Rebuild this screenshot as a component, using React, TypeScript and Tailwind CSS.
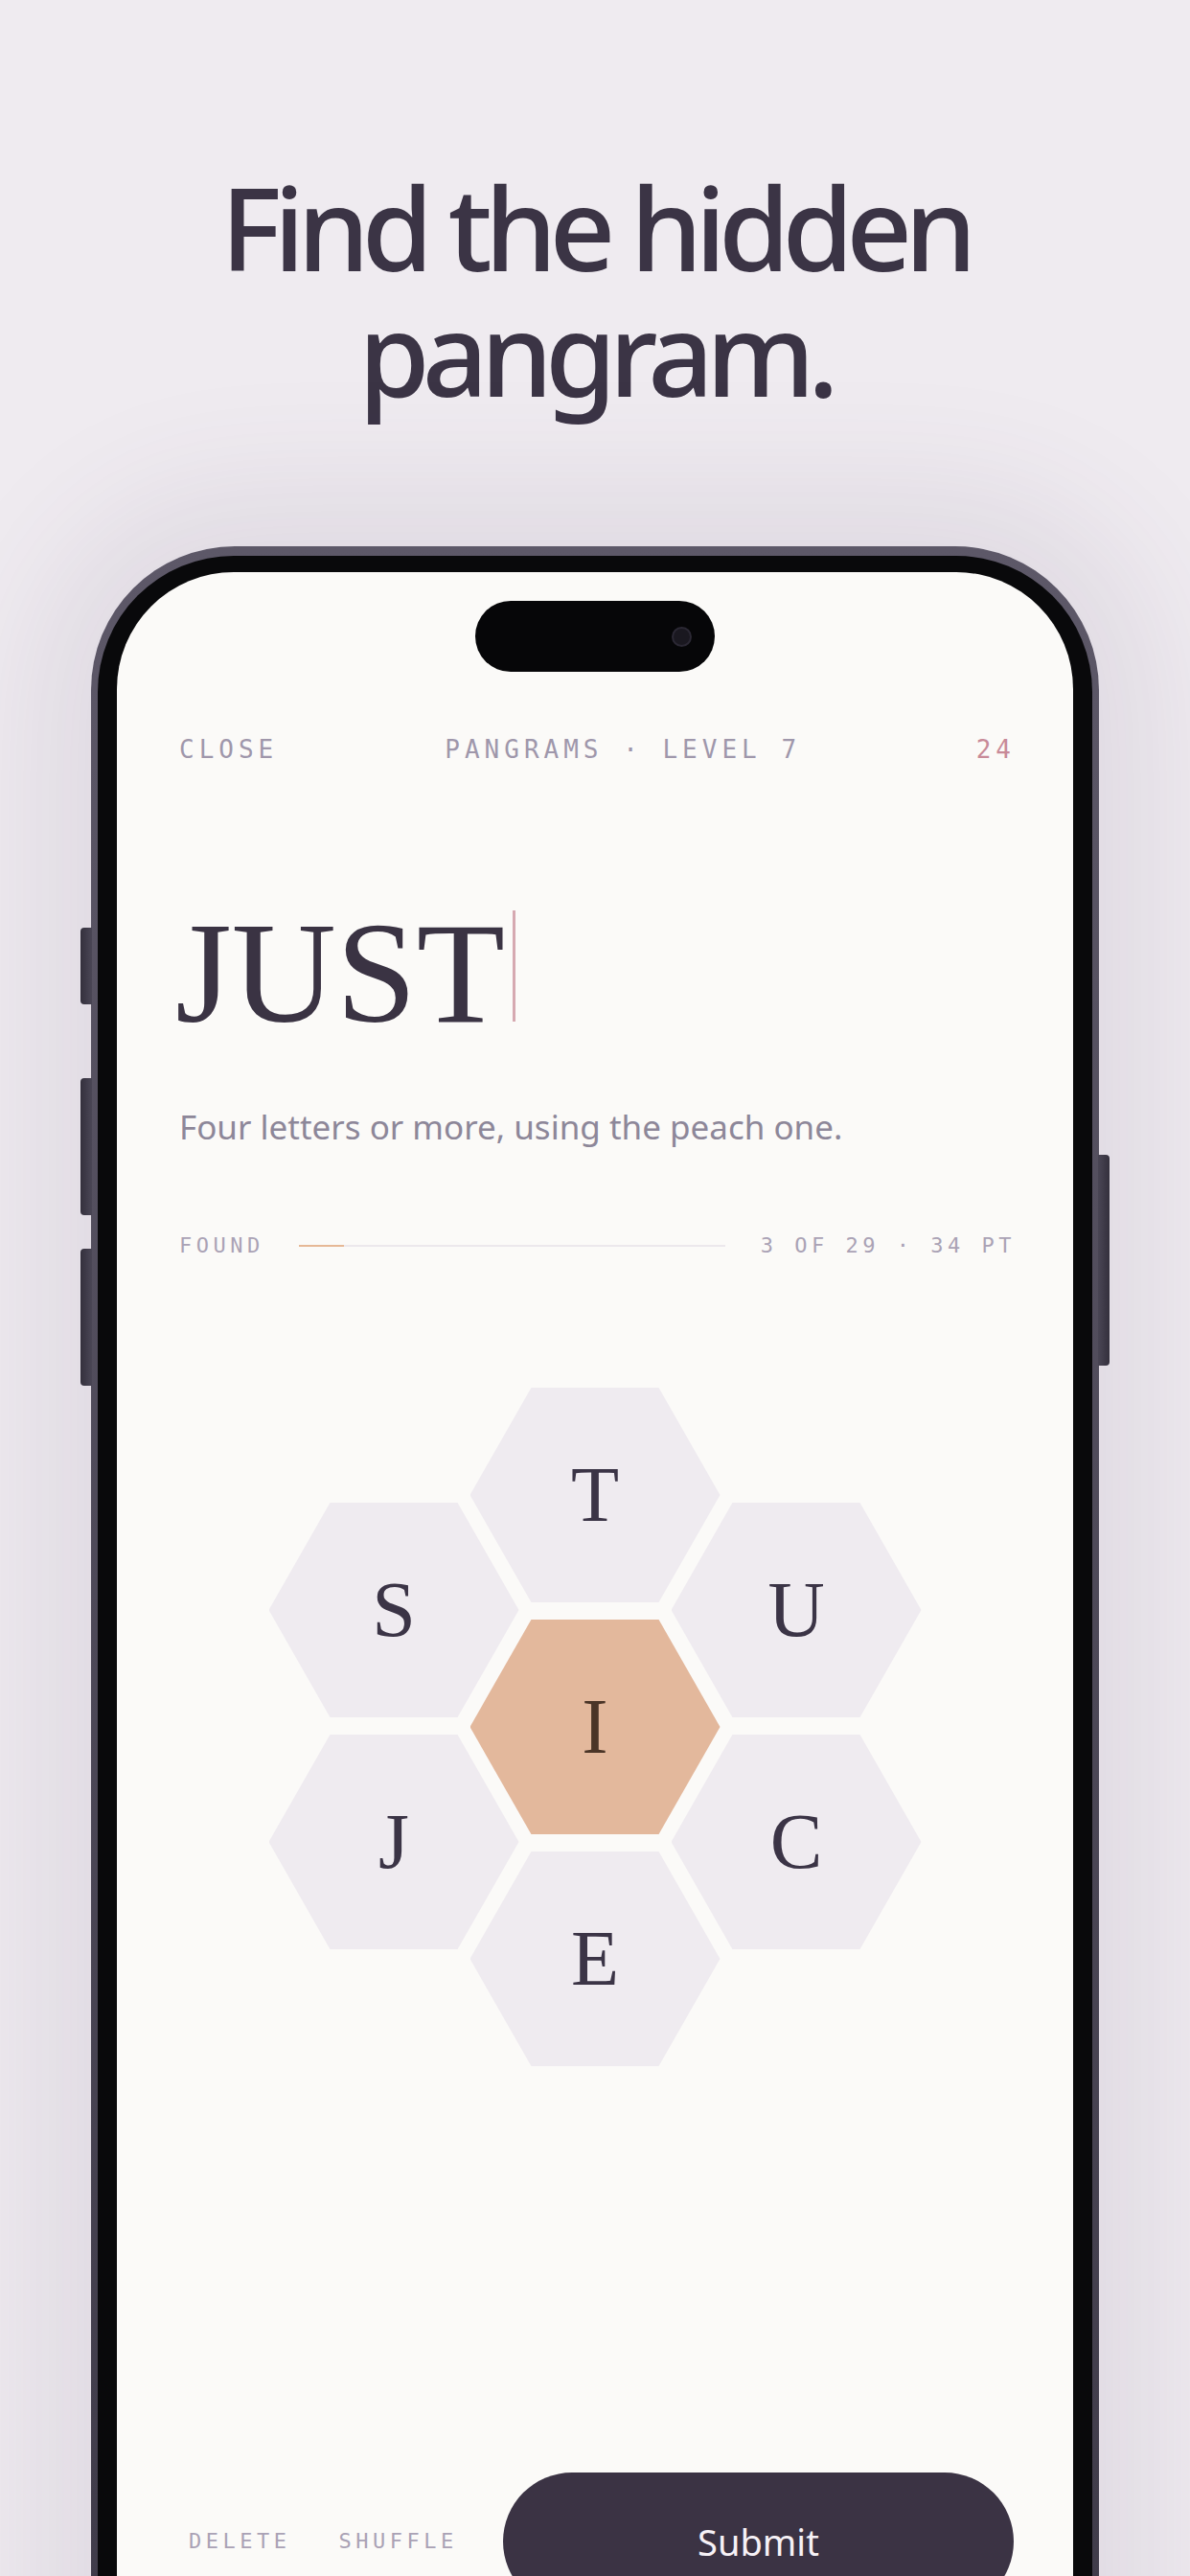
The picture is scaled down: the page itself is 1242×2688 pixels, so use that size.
import React from "react";

const mono = "font-['DejaVu_Sans_Mono','Liberation_Mono',monospace]";
const serif = "font-['Liberation_Serif','DejaVu_Serif',serif]";
const sans = "font-['Noto_Sans','Open_Sans',sans-serif]";

const hexShape =
    "[clip-path:polygon(24.5%_0,75.5%_0,100%_50%,75.5%_100%,24.5%_100%,0_50%)]";

const Hex = ({ letter, center = false }: { letter: string; center?: boolean }) => {
    return (
        <div
            className={`w-[261px] h-[224px] flex items-center justify-center ${hexShape} ${
                center ? "bg-[#e3b89c] text-[#4b3527]" : "bg-[#efebf0] text-[#3b3446]"
            }`}
        >
            <span className={`${serif} text-[82px] leading-none`}>{letter}</span>
        </div>
    );
};

export default function App() {
    return (
        <div className="w-[1242px] h-[2688px] overflow-hidden bg-[#efebf0] flex flex-col items-center">
            <h1
                className={`${sans} mt-[171px] text-center text-[120px] leading-[131px] font-medium tracking-[-0.065em] text-[#3b3445]`}
            >
                Find the hidden
                <br />
                pangram.
            </h1>

            {/* phone */}
            <div className="relative mt-[137px] w-[1052px] shrink-0 rounded-[150px] bg-gradient-to-b from-[#5d5868] to-[#3d3947] p-[7px] pt-[10px] shadow-[0_0_140px_50px_rgba(80,60,100,0.10)]">
                {/* side buttons */}
                <div className="absolute left-[-11px] top-[398px] w-[12px] h-[80px] rounded-l-[4px] bg-gradient-to-r from-[#34303d] to-[#4a4655]" />
                <div className="absolute left-[-11px] top-[555px] w-[12px] h-[143px] rounded-l-[4px] bg-gradient-to-r from-[#34303d] to-[#4a4655]" />
                <div className="absolute left-[-11px] top-[733px] w-[12px] h-[143px] rounded-l-[4px] bg-gradient-to-r from-[#34303d] to-[#4a4655]" />
                <div className="absolute right-[-11px] top-[635px] w-[12px] h-[220px] rounded-r-[4px] bg-gradient-to-l from-[#34303d] to-[#4a4655]" />

                <div className="rounded-[142px] bg-[#09090b] p-[20px] pt-[17px]">
                    <div className="rounded-[122px] bg-[#fbfaf8] h-[2300px] flex flex-col px-[65px]">
                        {/* dynamic island */}
                        <div className="mt-[30px] self-center w-[250px] h-[74px] rounded-full bg-[#060608] flex items-center justify-end pr-[24px]">
                            <div className="w-[21px] h-[21px] rounded-full bg-[#1a1820] border-2 border-[#2b2834]" />
                        </div>

                        {/* header */}
                        <div
                            className={`${mono} mt-[68px] flex text-[26px] leading-[26px] tracking-[5px] text-[#9f97ab] mr-[-5px]`}
                        >
                            <span>CLOSE</span>
                            <span className="ml-[174px]">PANGRAMS · LEVEL 7</span>
                            <span className="ml-auto text-[#c88a98]">24</span>
                        </div>

                        {/* current word */}
                        <div className="mt-[145px] flex items-start">
                            <span className={`${serif} text-[151px] leading-none text-[#3a3343] -ml-[4px]`}>
                                JUST
                            </span>
                            <div className="ml-[8px] mt-[10px] w-[3px] h-[116px] bg-[#d6a9b1]" />
                        </div>

                        <p className={`${sans} mt-[68px] text-[35px] leading-[34px] text-[#8d8799]`}>
                            Four letters or more, using the peach one.
                        </p>

                        {/* found progress */}
                        <div
                            className={`${mono} mt-[96px] flex items-center text-[22px] leading-[22px] tracking-[4.5px] text-[#aaa2b5] mr-[-5px]`}
                        >
                            <span>FOUND</span>
                            <div className="ml-[36px] mr-[37px] flex-1 h-[2px] bg-[#ece8ec] flex">
                                <div className="w-[47px] h-full bg-[#e6b896]" />
                            </div>
                            <span>3 OF 29 · 34 PT</span>
                        </div>

                        {/* hive */}
                        <div className="mt-[137px] self-center flex">
                            <div className="flex flex-col gap-[18px] pt-[120px]">
                                <Hex letter="S" />
                                <Hex letter="J" />
                            </div>
                            <div className="flex flex-col gap-[18px] -ml-[51px]">
                                <Hex letter="T" />
                                <Hex letter="I" center />
                                <Hex letter="E" />
                            </div>
                            <div className="flex flex-col gap-[18px] pt-[120px] -ml-[51px]">
                                <Hex letter="U" />
                                <Hex letter="C" />
                            </div>
                        </div>

                        {/* actions */}
                        <div className="mt-[424px] flex items-center">
                            <button
                                className={`${mono} ml-[10px] text-[22px] leading-[22px] tracking-[4.5px] text-[#aaa2b5]`}
                            >
                                DELETE
                            </button>
                            <button
                                className={`${mono} ml-[50px] text-[22px] leading-[22px] tracking-[4.5px] text-[#aaa2b5]`}
                            >
                                SHUFFLE
                            </button>
                            <button
                                className={`${sans} ml-auto -mr-[3px] w-[533px] h-[144px] rounded-full bg-[#3b3344] text-[38px] text-[#f6f1f6]`}
                            >
                                Submit
                            </button>
                        </div>
                    </div>
                </div>
            </div>
        </div>
    );
}
